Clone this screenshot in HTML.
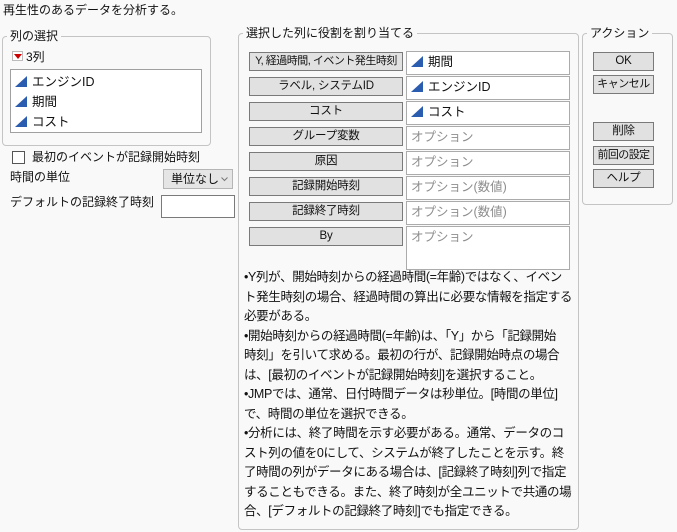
<!DOCTYPE html>
<html><head><meta charset="utf-8"><style>
*{box-sizing:border-box;margin:0;padding:0}
body{width:677px;height:532px;background:#f9f9f9;font-family:"Liberation Sans","Noto Sans CJK JP",sans-serif;font-size:12px;color:#111;position:relative;overflow:hidden}
.a{position:absolute;white-space:nowrap}
.grp{position:absolute;border:1px solid #c4c4c4;border-radius:4px}
.leg{position:absolute;background:#f9f9f9;padding:0 3px;top:-9px;left:4px;font-size:12px;line-height:16px}
.btn{position:absolute;background:#e1e1e1;border:1px solid #7a7a7a;text-align:center;line-height:17px;font-size:11.5px;white-space:nowrap;letter-spacing:-0.2px;overflow:hidden}
.fld{position:absolute;background:#fff;border:1px solid #ababab;line-height:21px;padding-left:4px;white-space:nowrap;font-size:12.5px}
.opt{color:#8d8d8d}
.tri{display:inline-block;width:0;height:0;border-left:12px solid transparent;border-bottom:11px solid #2a5db0;vertical-align:-1px;margin-right:5px}
.txt{position:absolute;left:244px;top:268px;line-height:19.5px;font-size:12.5px;letter-spacing:-0.35px;white-space:nowrap}
</style></head><body>
<div class="a" style="left:3px;top:2px;line-height:16px">再生性のあるデータを分析する。</div>

<div class="grp" style="left:2px;top:36px;width:209px;height:110px"><div class="leg">列の選択</div></div>
<div class="a" style="left:12px;top:51px;width:11px;height:10px;background:#fff;border:1px solid #bbb"></div>
<div class="a" style="left:14px;top:54px;width:0;height:0;border-left:4px solid transparent;border-right:4px solid transparent;border-top:5px solid #c00"></div>
<div class="a" style="left:26px;top:49px;line-height:16px">3列</div>
<div class="a" style="left:10px;top:69px;width:192px;height:64px;background:#fff;border:1px solid #a0a0a0"></div>
<div class="a" style="left:15px;top:72px;line-height:20px;font-size:12.5px"><span class="tri"></span>エンジンID<br><span class="tri"></span>期間<br><span class="tri"></span>コスト</div>

<div class="a" style="left:12px;top:151px;width:13px;height:13px;background:#fff;border:1px solid #555"></div>
<div class="a" style="left:32px;top:149px;line-height:16px">最初のイベントが記録開始時刻</div>
<div class="a" style="left:10px;top:169px;line-height:16px">時間の単位</div>
<div class="a" style="left:163px;top:169px;width:70px;height:20px;background:#e5e5e5;border:1px solid #b5b5b5;line-height:18px;padding-left:7px">単位なし<svg style="position:absolute;left:57px;top:7px" width="7" height="5"><path d="M0.5 0.5 L3.5 3.5 L6.5 0.5" fill="none" stroke="#777" stroke-width="1"/></svg></div>
<div class="a" style="left:10px;top:194px;line-height:16px">デフォルトの記録終了時刻</div>
<div class="a" style="left:161px;top:195px;width:74px;height:23px;background:#fff;border:1px solid #7a7a7a"></div>

<div class="grp" style="left:238px;top:33px;width:341px;height:497px"><div class="leg">選択した列に役割を割り当てる</div></div>
<div class="btn" style="left:249px;top:52px;width:154px;height:19px;font-size:11px;letter-spacing:-0.5px">Y, 経過時間, イベント発生時刻</div>
<div class="btn" style="left:249px;top:77px;width:154px;height:19px">ラベル, システムID</div>
<div class="btn" style="left:249px;top:102px;width:154px;height:19px">コスト</div>
<div class="btn" style="left:249px;top:127px;width:154px;height:19px">グループ変数</div>
<div class="btn" style="left:249px;top:152px;width:154px;height:19px">原因</div>
<div class="btn" style="left:249px;top:177px;width:154px;height:19px">記録開始時刻</div>
<div class="btn" style="left:249px;top:202px;width:154px;height:19px">記録終了時刻</div>
<div class="btn" style="left:249px;top:227px;width:154px;height:19px">By</div>
<div class="fld" style="left:406px;top:51px;width:164px;height:24px"><span class="tri"></span>期間</div>
<div class="fld" style="left:406px;top:76px;width:164px;height:24px"><span class="tri"></span>エンジンID</div>
<div class="fld" style="left:406px;top:101px;width:164px;height:24px"><span class="tri"></span>コスト</div>
<div class="fld opt" style="left:406px;top:126px;width:164px;height:24px">オプション</div>
<div class="fld opt" style="left:406px;top:151px;width:164px;height:24px">オプション</div>
<div class="fld opt" style="left:406px;top:176px;width:164px;height:24px">オプション(数値)</div>
<div class="fld opt" style="left:406px;top:201px;width:164px;height:24px">オプション(数値)</div>
<div class="fld opt" style="left:406px;top:226px;width:164px;height:44px">オプション</div>
<div class="txt">•Y列が、開始時刻からの経過時間(=年齢)ではなく、イベン<br>ト発生時刻の場合、経過時間の算出に必要な情報を指定する<br>必要がある。<br>•開始時刻からの経過時間(=年齢)は、「Y」から「記録開始<br>時刻」を引いて求める。最初の行が、記録開始時点の場合<br>は、[最初のイベントが記録開始時刻]を選択すること。<br>•JMPでは、通常、日付時間データは秒単位。[時間の単位]<br>で、時間の単位を選択できる。<br>•分析には、終了時間を示す必要がある。通常、データのコ<br>スト列の値を0にして、システムが終了したことを示す。終<br>了時間の列がデータにある場合は、[記録終了時刻]列で指定<br>することもできる。また、終了時刻が全ユニットで共通の場<br>合、[デフォルトの記録終了時刻]でも指定できる。</div>

<div class="grp" style="left:582px;top:33px;width:91px;height:172px"><div class="leg">アクション</div></div>
<div class="btn" style="left:593px;top:52px;width:61px;height:19px">OK</div>
<div class="btn" style="left:593px;top:75px;width:61px;height:19px;font-size:11px;letter-spacing:-0.5px">キャンセル</div>
<div class="btn" style="left:593px;top:122px;width:61px;height:19px">削除</div>
<div class="btn" style="left:593px;top:146px;width:61px;height:19px;font-size:11px;letter-spacing:-0.6px">前回の設定</div>
<div class="btn" style="left:593px;top:169px;width:61px;height:19px">ヘルプ</div>
</body></html>
